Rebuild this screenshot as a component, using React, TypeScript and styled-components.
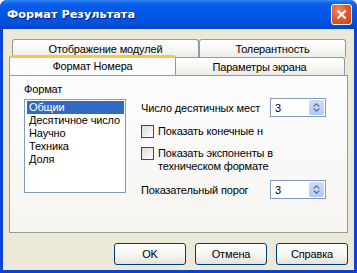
import React from 'react'
import styled, {createGlobalStyle} from 'styled-components'

const GlobalStyle = createGlobalStyle`
  html, body {
    margin: 0;
    padding: 0;
    background: #ffffff;
  }
  body {
    font-family: 'Liberation Sans', Arial, sans-serif;
    font-size: 11px;
    color: #000000;
  }
`

const Window = styled.div`
  width: 357px;
  height: 273px;
  display: flex;
  flex-direction: column;
  background: #0842d6;
  border-radius: 7px 7px 0 0;
  overflow: hidden;
`

const TitleBar = styled.div`
  height: 29px;
  flex: none;
  display: flex;
  align-items: center;
  justify-content: space-between;
  padding: 0 5px 0 7px;
  background: linear-gradient(
    to bottom,
    #3b8cf7 0px,
    #1a6cf0 2px,
    #0a5ce9 5px,
    #0058e6 14px,
    #0053df 22px,
    #0049d0 27px,
    #0042c2 29px
  );
`

const Title = styled.span`
  font-family: 'DejaVu Sans', 'Liberation Sans', sans-serif;
  font-weight: bold;
  font-size: 11.3px;
  color: #ffffff;
  text-shadow: 1px 1px 0 #0a1883;
`

const CloseButton = styled.div`
  width: 21px;
  height: 21px;
  box-sizing: border-box;
  border: 1px solid #ffffff;
  border-radius: 3px;
  background: radial-gradient(circle at 35% 30%, #f08a6a 0%, #e25a2e 45%, #c5401a 100%);
  display: flex;
  align-items: center;
  justify-content: center;
`

const Frame = styled.div`
  flex: 1;
  display: flex;
  padding: 0 3px 3px 3px;
`

const Client = styled.div`
  flex: 1;
  display: flex;
  flex-direction: column;
  background: #ece9d8;
  padding: 10px 6px 0 6px;
  letter-spacing: -0.15px;
`

const TabRow = styled.div<{$indent: number}>`
  display: flex;
  height: 18px;
  padding-left: ${p => p.$indent}px;
`

const Tab = styled.div<{$width: number; $active?: boolean}>`
  position: relative;
  box-sizing: border-box;
  width: ${p => p.$width}px;
  display: flex;
  align-items: center;
  justify-content: center;
  white-space: nowrap;
  border: 1px solid #919b9c;
  border-bottom: none;
  border-radius: 3px 3px 0 0;
  background: linear-gradient(to bottom, #ffffff 0%, #f7f7f4 50%, #ecebe6 100%);
  ${p =>
    p.$active &&
    `
    z-index: 2;
    height: 20px;
    margin: -2px -2px 0 -2px;
    width: ${p.$width + 4}px;
    border-top: 3px solid #ffc83c;
    border-color: #e6a23a #919b9c #919b9c;
    border-top-color: #ffc83c;
    background: #fcfcfe;
    padding-bottom: 1px;
  `}
`

const Panel = styled.div`
  position: relative;
  z-index: 1;
  height: 158px;
  box-sizing: border-box;
  border: 1px solid #919b9c;
  background: linear-gradient(to bottom, #fcfcfe 0%, #f6f5f0 100%);
  display: grid;
  grid-template-columns: 102px 1fr;
  column-gap: 15px;
  padding: 7px 0 0 14px;
`

const FormatColumn = styled.div`
  display: flex;
  flex-direction: column;
`

const Label = styled.span`
  line-height: 13px;
  height: 16px;
`

const ListBox = styled.div`
  width: 102px;
  height: 94px;
  box-sizing: border-box;
  border: 1px solid #7f9db9;
  background: #ffffff;
  padding: 1px 1px 0 2px;
  display: flex;
  flex-direction: column;
`

const ListItem = styled.div<{$selected?: boolean}>`
  height: 13px;
  line-height: 13px;
  padding-left: 2px;
  white-space: nowrap;
  color: ${p => (p.$selected ? '#ffffff' : '#000000')};
  background: ${p => (p.$selected ? '#316ac5' : 'transparent')};
`

const Options = styled.div`
  display: flex;
  flex-direction: column;
  padding-top: 15px;
`

const SpinRow = styled.div<{$top?: number}>`
  display: flex;
  align-items: center;
  justify-content: space-between;
  width: 185px;
  margin-top: ${p => p.$top ?? 0}px;
  white-space: nowrap;
`

const SpinBox = styled.div`
  width: 56px;
  height: 19px;
  box-sizing: border-box;
  border: 1px solid #7f9db9;
  background: #ffffff;
  display: flex;
  align-items: center;
  justify-content: space-between;
  padding: 1px 1px 1px 4px;
`

const SpinButtons = styled.div`
  width: 15px;
  height: 15px;
  border-radius: 2px;
  background: linear-gradient(to bottom, #cfdcfb, #b4c8f6);
  display: flex;
  align-items: center;
  justify-content: center;
`

const CheckRow = styled.div<{$top: number}>`
  display: flex;
  align-items: flex-start;
  gap: 4px;
  margin-top: ${p => p.$top}px;
  line-height: 13px;
  white-space: nowrap;
`

const CheckBox = styled.div`
  flex: none;
  width: 13px;
  height: 13px;
  box-sizing: border-box;
  border: 1px solid #1c5180;
  background: linear-gradient(135deg, #dcdcd7 0%, #f0f0ea 60%, #ffffff 100%);
`

const ButtonRow = styled.div`
  display: flex;
  justify-content: flex-end;
  gap: 9px;
  padding-top: 10px;
`

const Button = styled.div`
  width: 72px;
  height: 22px;
  box-sizing: border-box;
  border: 1px solid #003c74;
  border-radius: 3px;
  background: linear-gradient(to bottom, #ffffff 0%, #f4f4f0 60%, #e3e2da 100%);
  display: flex;
  align-items: center;
  justify-content: center;
`

const Spin = ({value}: {value: string}) => (
  <SpinBox>
    <span>{value}</span>
    <SpinButtons>
      <svg width="9" height="11" viewBox="0 0 9 11">
        <path d="M4.5 1 L8 4.5 L6.5 4.5 L4.5 2.5 L2.5 4.5 L1 4.5 Z" fill="#4d6185" />
        <path d="M4.5 10 L8 6.5 L6.5 6.5 L4.5 8.5 L2.5 6.5 L1 6.5 Z" fill="#4d6185" />
      </svg>
    </SpinButtons>
  </SpinBox>
)

const formats = ['Общии', 'Десятичное число', 'Научно', 'Техника', 'Доля']

const App = () => (
  <>
    <GlobalStyle />
    <Window>
      <TitleBar>
        <Title>Формат Результата</Title>
        <CloseButton>
          <svg width="11" height="11" viewBox="0 0 11 11">
            <path d="M1.5 1.5 L9.5 9.5 M9.5 1.5 L1.5 9.5" stroke="#ffffff" strokeWidth="2" />
          </svg>
        </CloseButton>
      </TitleBar>
      <Frame>
        <Client>
          <TabRow $indent={3}>
            <Tab $width={187}>Отображение модулей</Tab>
            <Tab $width={147}>Толерантность</Tab>
          </TabRow>
          <TabRow $indent={2}>
            <Tab $width={163} $active>
              Формат Номера
            </Tab>
            <Tab $width={171}>Параметры экрана</Tab>
          </TabRow>
          <Panel>
            <FormatColumn>
              <Label>Формат</Label>
              <ListBox>
                {formats.map((f, i) => (
                  <ListItem key={f} $selected={i === 0}>
                    {f}
                  </ListItem>
                ))}
              </ListBox>
            </FormatColumn>
            <Options>
              <SpinRow>
                <span>Число десятичных мест</span>
                <Spin value="3" />
              </SpinRow>
              <CheckRow $top={8}>
                <CheckBox />
                <span>Показать конечные н</span>
              </CheckRow>
              <CheckRow $top={9}>
                <CheckBox />
                <span>
                  Показать экспоненты в
                  <br />
                  техническом формате
                </span>
              </CheckRow>
              <SpinRow $top={7}>
                <span>Показательный порог</span>
                <Spin value="3" />
              </SpinRow>
            </Options>
          </Panel>
          <ButtonRow>
            <Button>OK</Button>
            <Button>Отмена</Button>
            <Button>Справка</Button>
          </ButtonRow>
        </Client>
      </Frame>
    </Window>
  </>
)

export default App
